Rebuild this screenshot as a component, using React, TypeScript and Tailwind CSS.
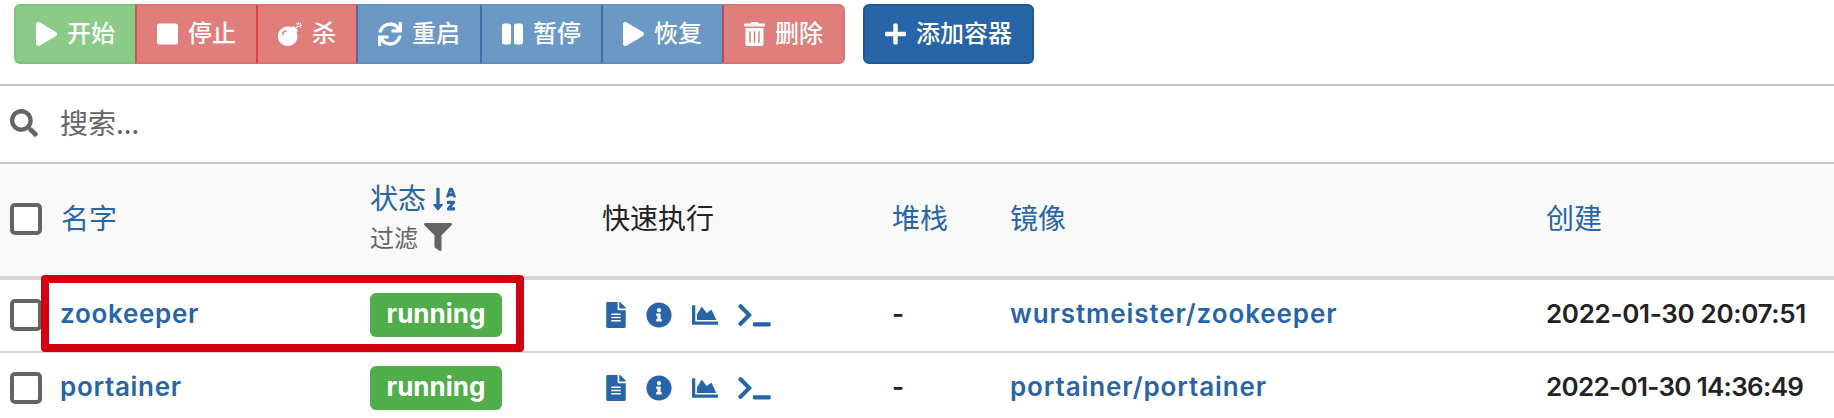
import React from "react";
import {
  FaPlay, FaStop, FaBomb, FaSync, FaPause, FaTrashAlt, FaPlus, FaSearch,
  FaSortAlphaDown, FaFilter, FaFileAlt, FaInfoCircle, FaChartArea, FaTerminal,
} from "react-icons/fa";

const actions = [
  { label: "开始", icon: <FaPlay className="h-6 w-[21px]" />, look: "w-[121px] rounded-l-md border-l-2 border-l-[#7fc27c] border-y-[#7fc27c] bg-[#8acb88] pl-5" },
  { label: "停止", icon: <FaStop className="h-6 w-[21px]" />, look: "w-[121px] border-l-2 border-l-[#b4614f] border-y-[#dc7270] bg-[#e07e7b] pl-5" },
  { label: "杀", icon: <FaBomb className="h-6 w-6" />, look: "w-[100px] border-l-2 border-l-[#d14644] border-y-[#dc7270] bg-[#e07e7b] pl-5" },
  { label: "重启", icon: <FaSync className="h-6 w-6" />, look: "w-[124px] border-l-2 border-l-[#66648e] border-y-[#658fbb] bg-[#6c98c5] pl-5" },
  { label: "暂停", icon: <FaPause className="h-6 w-[21px]" />, look: "w-[121px] border-l-2 border-l-[#3c6ea7] border-y-[#658fbb] bg-[#6c98c5] pl-5" },
  { label: "恢复", icon: <FaPlay className="h-6 w-[21px]" />, look: "w-[121px] border-l-2 border-l-[#3c6ea7] border-y-[#658fbb] bg-[#6c98c5] pl-5" },
  { label: "删除", icon: <FaTrashAlt className="h-6 w-[21px]" />, look: "w-[123px] rounded-r-md border-x-2 border-l-[#b44f5b] border-r-[#dc7270] border-y-[#dc7270] bg-[#e07e7b] pl-5" },
];

const containers = [
  { name: "zookeeper", image: "wurstmeister/zookeeper", created: "2022-01-30 20:07:51", createdTrack: "tracking-[-0.33px]" },
  { name: "portainer", image: "portainer/portainer", created: "2022-01-30 14:36:49", createdTrack: "tracking-[-0.68px]" },
];

function Checkbox() {
  return <span className="block h-8 w-8 shrink-0 rounded-[5px] border-4 border-[#646464] bg-white" />;
}

function ActionBar() {
  return (
    <div className="flex h-[84px] shrink-0 pl-[14px] pt-1 text-2xl leading-[60px] text-white">
      {actions.map((a) => (
        <button key={a.label} className={"flex h-[60px] items-center gap-[10px] whitespace-nowrap border-y-2 font-medium " + a.look}>
          {a.icon}
          <span className="leading-8">{a.label}</span>
        </button>
      ))}
      <button className="ml-[18px] flex h-[60px] w-[171px] items-center gap-[10px] whitespace-nowrap rounded-md border-2 border-[#23588f] bg-[#2864a8] pl-5 font-medium">
        <FaPlus className="h-6 w-[21px]" />
        <span className="leading-8">添加容器</span>
      </button>
    </div>
  );
}

function Row({ item }: { item: (typeof containers)[number] }) {
  return (
    <div className="flex h-[73px] shrink-0 items-center border-b-2 border-[#d4d4d4] pb-px pl-[10px] text-[26px] font-semibold leading-8">
      <Checkbox />
      <div className="ml-[18px] w-[310px] pb-[3px] tracking-[0.7px] text-[#2864a8]">{item.name}</div>
      <div className="w-[233px]">
        <span className="flex h-11 w-[132px] items-center justify-center rounded-md bg-[#4fae4a] pb-[3px] font-bold text-white">running</span>
      </div>
      <div className="flex w-[289px] items-center pl-[3px] text-[#2864a8]">
        <FaFileAlt className="h-[26px] w-5" />
        <FaInfoCircle className="ml-5 h-[26px] w-[26px]" />
        <FaChartArea className="ml-5 h-[26px] w-[26px]" />
        <FaTerminal className="ml-5 h-[26px] w-[33px]" />
      </div>
      <div className="w-[118px] pb-[3px] text-[#222]">-</div>
      <div className="w-[536px] pb-[3px] tracking-[0.89px] text-[#2864a8]">{item.image}</div>
      <div className={"whitespace-nowrap pb-[3px] text-[#222] " + item.createdTrack}>{item.created}</div>
    </div>
  );
}

export default function App() {
  return (
    <div className="relative flex h-[418px] w-[1834px] flex-col overflow-hidden bg-white font-['Inter','Noto_Sans_CJK_SC',sans-serif]">
      <ActionBar />
      <div className="flex h-20 shrink-0 items-center border-y-2 border-[#c5c5c5] pb-[2px] pl-[10px] text-[28px] leading-9 text-[#646464]">
        <FaSearch className="h-7 w-7" />
        <span className="ml-[22px] pb-[3px] font-['Noto_Sans_CJK_SC',sans-serif]">搜索...</span>
      </div>
      <div className="flex h-[116px] shrink-0 items-center border-b-4 border-[#d4d4d4] bg-[#f9f9f9] pb-[3px] pl-[10px] text-[28px] leading-9 text-[#2864a8]">
        <Checkbox />
        <div className="ml-[19px] w-[309px]">名字</div>
        <div className="w-[232px]">
          <div className="flex items-center gap-[7px]">
            <span>状态</span>
            <FaSortAlphaDown className="h-[26px] w-[23px]" />
          </div>
          <div className="mt-[4px] flex items-center gap-[6px] text-[#646464]">
            <span className="text-2xl leading-9">过滤</span>
            <FaFilter className="mb-[3px] h-7 w-7" />
          </div>
        </div>
        <div className="w-[290px] text-[#222]">快速执行</div>
        <div className="w-[118px]">堆栈</div>
        <div className="w-[536px]">镜像</div>
        <div>创建</div>
      </div>
      {containers.map((c) => <Row key={c.name} item={c} />)}
      <div className="absolute left-[41px] top-[275px] h-[77px] w-[483px] rounded-[4px] border-8 border-[#d3000f]" />
    </div>
  );
}
